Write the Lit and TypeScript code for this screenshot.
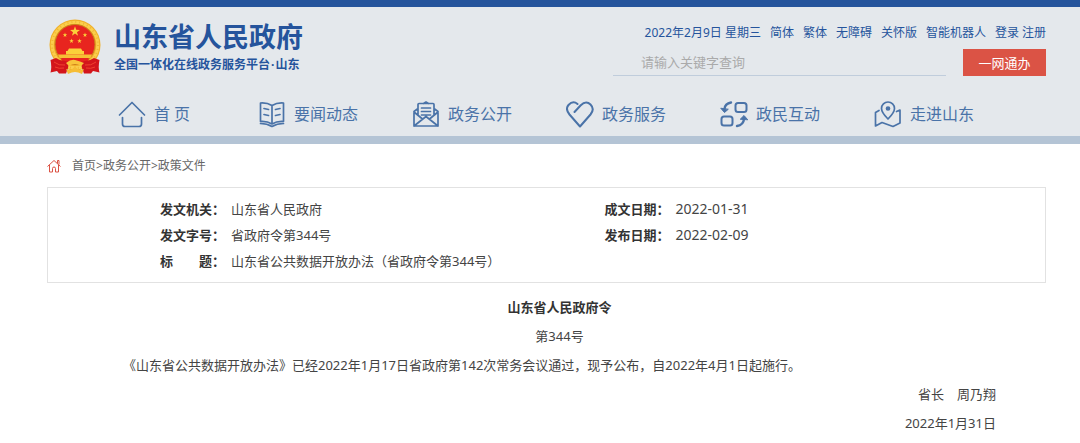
import { LitElement, html, css, svg } from "lit";
import { customElement } from "lit/decorators.js";

const star = (cx: number, cy: number, r: number) => {
  const pts = Array.from({ length: 10 }, (_, i) => {
    const a = (Math.PI / 5) * i - Math.PI / 2;
    const d = i % 2 ? r * 0.4 : r;
    return `${(cx + d * Math.cos(a)).toFixed(2)},${(cy + d * Math.sin(a)).toFixed(2)}`;
  });
  return svg`<polygon points=${pts.join(" ")} fill="#fbd03a"/>`;
};

const emblem = html`<svg class="emblem" viewBox="0 0 52 56" aria-hidden="true">
  <circle cx="26" cy="26" r="25.5" fill="#f0b02a"/>
  <circle cx="26" cy="26" r="22.8" fill="none" stroke="#fbcf4c" stroke-width="3"/>
  <circle cx="26" cy="26" r="23" fill="none" stroke="#f0b534" stroke-width="2" stroke-dasharray="1 3"/>
  <circle cx="26" cy="25.5" r="20" fill="#e8251f" stroke="#c9821a" stroke-width="1"/>
  ${star(26, 12.5, 5.2)}${star(16, 16, 2.4)}${star(36, 16, 2.4)}${star(22.5, 22, 2.4)}${star(30.5, 22, 2.4)}
  <path d="M20 29.500h12l1.500 2.500h1.500v3.500H17V32h1.500z" fill="#fbd03a"/>
  <path d="M9 35.500h34l-1.500 3.500h-31z" fill="#f6c034"/>
  <path d="M12 40h28q-2 3-5 5H17q-3-2-5-5z" fill="#e8251f"/>
  <path d="M7 39q4 3 9 3l4 1-1 6-2 5.500h-7L8 52l-6.500 1.500Q3 48 1.500 41zM45 39q-4 3-9 3l-4 1 1 6 2 5.500h7l2-2.500 6.500 1.500Q49 48 50.500 41z" fill="#d3151b"/>
  <path d="M5 43q5 4 11 3M47 43q-5 4-11 3M6 48q4 2 9 1M46 48q-4 2-9 1" fill="none" stroke="#f0412f" stroke-width="1"/>
  <path d="M17 44q5-4 9-3t9 3l-3 3q-3-2-6-2t-6 2z" fill="#f8c43a"/>
  <path d="M17 50q5 3 9-3q4 6 9 3l-2 5q-4-2-7-2t-7 2z" fill="#f6bd35"/>
</svg>`;

const icons = {
  home: svg`<path d="M1.500 15 14 2.500 26.500 15M4.500 17.500V24q0 2.500 2.500 2.500h14q2.500 0 2.500-2.500v-6.500"/>`,
  book: svg`<path d="M14 5.500Q9 2.500 2.500 3v18.500Q9 21 14 24Q19 21 25.500 21.500V3Q19 2.500 14 5.500zM14 5.500V24M6 8.500l4.500 1M6 14.500l4.500 1M22 8.500l-4.500 1M22 14.500l-4.500 1M2.500 23.500Q9 23.500 14 26.500Q19 23.500 25.500 23.500"/>`,
  mail: svg`<path d="M6 8.500 2 11.500V26h24V11.500l-4-3M6 15V4.500q0-1 1-1h14q1 0 1 1V15M9.500 8h9M9.500 11.500h9M9.500 15h9M2 12l8.500 7M26 12l-8.500 7M2 26l12-9.500L26 26M11.500 3.500 14 2l2.500 1.500"/>`,
  heart: svg`<path d="M8.500 12 14.500 5.500Q20 0 24.500 4.500T24.500 14.500L14 26.500 3.500 14.500Q-1 9 2.500 5Q7 0 11.500 4" stroke-width="2"/>`,
  swap: svg`<rect x="15.500" y="3" width="11" height="9" rx="2.500" stroke-width="2"/><rect x="1.500" y="16.500" width="11" height="9" rx="2.500" stroke-width="2"/><path d="M11 2.500Q5 3.500 4.500 9M17 26Q23.500 25 24 19" stroke-width="2.400"/><path d="M1 8.500 4.500 12.500 8 9.500zM20.500 19 24 15.500l3.500 4z" fill="currentColor" stroke-width="1"/>`,
  map: svg`<path d="M14 19Q7.500 12.500 7.500 8.500a6.500 6.500 0 0 1 13 0Q20.500 12.500 14 19zM5 10.500 1.500 12.500V26L8 22.500 19 26.500 26 23V10L22.500 11.500"/><circle cx="14" cy="8.500" r="1.500" fill="currentColor"/>`,
};

const navItems = [
  { label: "首 页", icon: icons.home },
  { label: "要闻动态", icon: icons.book },
  { label: "政务公开", icon: icons.mail },
  { label: "政务服务", icon: icons.heart },
  { label: "政民互动", icon: icons.swap },
  { label: "走进山东", icon: icons.map },
];

@customElement("site-header")
export class SiteHeader extends LitElement {
  static styles = css`
    :host {
      display: block;
      background: #e4e8ec;
      border-top: 7px solid #25549c;
      border-bottom: 8px solid #b4c4d5;
      color: #25549c;
    }
    a { color: inherit; text-decoration: none; }
    .top {
      display: flex;
      justify-content: space-between;
      padding: 12px 34px 0 49px;
    }
    .brand { display: flex; gap: 13px; }
    .emblem { width: 52px; height: 56px; }
    .names { font-weight: 700; }
    .name { margin: 0; font-size: 27px; line-height: 36px; }
    .sub { margin: 0; font-size: 12px; line-height: 20px; }
    .dot { padding: 0 1px; }
    .tools { display: flex; flex-direction: column; gap: 6px; }
    .links {
      display: flex;
      justify-content: flex-end;
      gap: 9px;
      padding-top: 4px;
      font-size: 12px;
      line-height: 20px;
    }
    .account { display: flex; gap: 3px; }
    .search { display: flex; gap: 17px; }
    .field {
      box-sizing: border-box;
      width: 333px;
      height: 27px;
      padding: 0 0 0 28px;
      border: 0;
      border-bottom: 1px solid #c0cddc;
      background: none;
      font: inherit;
      font-size: 13px;
      outline: none;
    }
    .field::placeholder { color: #aaa; opacity: 1; }
    .go {
      width: 83px;
      height: 27px;
      padding: 0;
      border: 0;
      background: #db5345;
      color: #fff;
      font: inherit;
      font-size: 13px;
    }
    .nav {
      display: flex;
      padding: 22px 79px 6px 77px;
      font-size: 16px;
      line-height: 32px;
      color: #4a73a8;
    }
    .item { flex: 1; display: flex; justify-content: center; align-items: center; gap: 8px; white-space: pre; }
    .icon {
      width: 28px;
      height: 28px;
      fill: none;
      stroke: currentColor;
      stroke-width: 1.7;
      stroke-linecap: round;
      stroke-linejoin: round;
    }
  `;

  render() {
    return html`
      <div class="top">
        <div class="brand">
          ${emblem}
          <div class="names">
            <h1 class="name">山东省人民政府</h1>
            <p class="sub">全国一体化在线政务服务平台<span class="dot">·</span>山东</p>
          </div>
        </div>
        <div class="tools">
          <div class="links">
            <span>2022年2月9日 星期三</span>
            ${["简体", "繁体", "无障碍", "关怀版", "智能机器人"].map((t) => html`<a href="#">${t}</a>`)}
            <span class="account"><a href="#">登录</a><a href="#">注册</a></span>
          </div>
          <form class="search" @submit=${(e: Event) => e.preventDefault()}>
            <input class="field" type="search" aria-label="请输入关键字查询" placeholder="请输入关键字查询" />
            <button class="go" type="submit">一网通办</button>
          </form>
        </div>
      </div>
      <nav class="nav">
        ${navItems.map((n) => html`<a class="item" href="#"><svg class="icon" viewBox="0 0 28 28" aria-hidden="true">${n.icon}</svg><span>${n.label}</span></a>`)}
      </nav>
    `;
  }
}

@customElement("app-root")
export class AppRoot extends LitElement {
  static styles = css`
    :host {
      display: block;
      background: #fff;
      color: #444;
      font-family: "Noto Sans", "Noto Sans CJK SC", sans-serif;
      font-size: 13px;
    }
    a { color: inherit; text-decoration: none; }
    main { padding: 0 34px 0 47px; }
    .crumbs {
      display: flex;
      align-items: center;
      padding: 12px 0 11px;
      font-size: 12px;
      line-height: 20px;
      color: #666;
    }
    .house {
      width: 14px;
      height: 14px;
      margin-right: 11px;
      fill: none;
      stroke: #db5345;
      stroke-width: 1;
    }
    .meta {
      display: grid;
      grid-template-columns: 1fr 1fr;
      column-gap: 4px;
      margin: 0;
      padding: 8px 0 8px 112px;
      border: 1px solid #e2e2e2;
      line-height: 26px;
    }
    .pair { display: flex; gap: 6px; }
    .wide { grid-column: 1 / -1; }
    dt { font-weight: 700; white-space: pre; color: #333; }
    dd { margin: 0; }
    .date { font-size: 14px; }
    article { padding: 10px 50px 0; line-height: 29px; text-indent: 2em; }
    h2 { margin: 0; font-size: 13px; text-align: center; color: #333; }
    p { margin: 0; }
    .center { text-align: center; }
    .sign { text-align: right; white-space: pre; }
  `;

  render() {
    return html`
      <site-header></site-header>
      <main>
        <nav class="crumbs">
          <svg class="house" viewBox="0 0 14 14" aria-hidden="true"><path d="M.5 7.500 7 1.500l6.500 6M2.500 6v7H5.500V9.500q0-1.500 1.500-1.500t1.500 1.500V13h3V6M10.500 4.500v-3h1.500v4"/></svg>
          <a href="#">首页</a>&gt;<a href="#">政务公开</a>&gt;<a href="#">政策文件</a>
        </nav>
        <dl class="meta">
          <div class="pair"><dt>发文机关：</dt><dd>山东省人民政府</dd></div>
          <div class="pair"><dt>成文日期：</dt><dd class="date">2022-01-31</dd></div>
          <div class="pair"><dt>发文字号：</dt><dd>省政府令第344号</dd></div>
          <div class="pair"><dt>发布日期：</dt><dd class="date">2022-02-09</dd></div>
          <div class="pair wide"><dt>标　　题：</dt><dd>山东省公共数据开放办法（省政府令第344号）</dd></div>
        </dl>
        <article>
          <h2>山东省人民政府令</h2>
          <p class="center">第344号</p>
          <p>《山东省公共数据开放办法》已经2022年1月17日省政府第142次常务会议通过，现予公布，自2022年4月1日起施行。</p>
          <p class="sign">省长　周乃翔</p>
          <p class="sign">2022年1月31日</p>
        </article>
      </main>
    `;
  }
}
